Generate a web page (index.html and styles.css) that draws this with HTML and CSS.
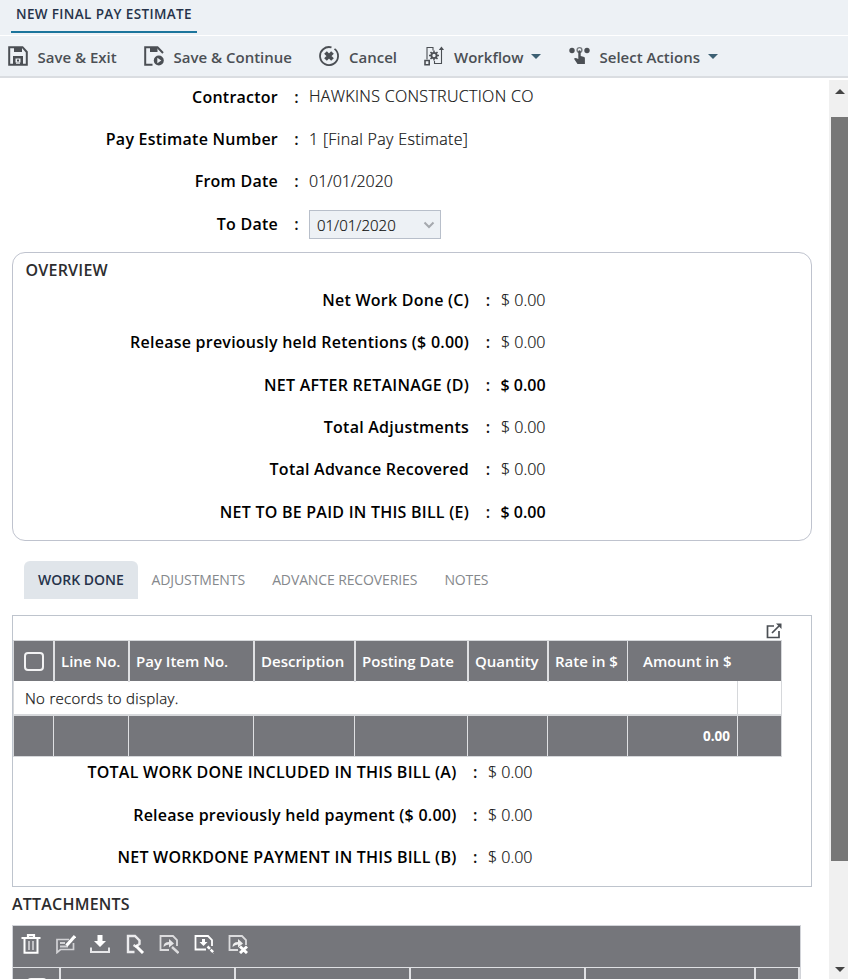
FILE: index.html
```html
<!DOCTYPE html>
<html lang="en">
<head>
<meta charset="utf-8">
<title>New Final Pay Estimate</title>
<link rel="stylesheet" href="styles.css">
</head>
<body>
<header class="titlebar"><h1 class="title"><span>NEW FINAL PAY ESTIMATE</span></h1></header>
<nav class="toolbar">
  <button class="tool save-exit">
    <svg width="20" height="20" viewBox="0 0 20 20"><path d="M1.200 1.200H14.500L18.800 6V18.800H1.200Z" fill="none" stroke="#4b4f54" stroke-width="2"/><path d="M6 1h8v5H6zM5 10h10v8.500h-3V16.500H8v2H5z" fill="#4b4f54"/><path d="M7.500 12.500h5v4h-5z" fill="#edf1f5"/><path d="M9 13.500h2v2H9z" fill="#4b4f54"/></svg>
    <span>Save &amp; Exit</span></button>
  <button class="tool save-cont">
    <svg width="20" height="20" viewBox="0 0 20 20"><path d="M8.500 18.800H1.200V1.200H13.500L19 7" fill="none" stroke="#4b4f54" stroke-width="2"/><path d="M6 1h7.500v5H6z" fill="#4b4f54"/><circle cx="14.800" cy="14.500" r="5" fill="#4b4f54"/><path d="M13.300 11.700v5.600l4-2.800z" fill="#edf1f5"/></svg>
    <span>Save &amp; Continue</span></button>
  <button class="tool cancel">
    <svg width="20" height="20" viewBox="0 0 20 20"><path d="M15.500 2.900A9 9 0 1 1 12.500 1.400" fill="none" stroke="#4b4f54" stroke-width="1.800"/><path d="M6.500 6.500l7 7M13.500 6.500l-7 7" stroke="#4b4f54" stroke-width="3.800"/></svg>
    <span>Cancel</span></button>
  <button class="tool workflow">
    <svg width="20" height="20" viewBox="0 0 20 20" fill="none" stroke="#4b4f54"><path d="M3 13.500V1.500H9V4.500M17.500 3V17.500H10.500V15" stroke-width="1.100"/><path d="M1 14.500h4.200v4.200H1z" stroke-width="1.600"/><path d="M14.800 4L17.500.5 20 4z" fill="#4b4f54" stroke="none"/><circle cx="10" cy="9.500" r="2.600" stroke-width="1.900"/><path d="M10 4.500v2M10 12.500v2M5 9.500h2M13 9.500h2M6.500 6l1.400 1.400M12.100 11.600l1.400 1.400M13.500 6l-1.400 1.400M7.900 11.600l-1.400 1.400" stroke-width="1.500"/></svg>
    <span>Workflow</span><i class="caret"></i></button>
  <button class="tool actions">
    <svg width="21" height="20" viewBox="0 0 21 20"><circle cx="3" cy="4.500" r="2.700" fill="#4b4f54"/><circle cx="18" cy="4.500" r="2.700" fill="#4b4f54"/><circle cx="10.500" cy="4" r="2.400" fill="none" stroke="#777b7f" stroke-width="1.400"/><path d="M9.300 5q1.200-1.400 2.400 0v5l3.500 1q1 .5.700 2v5H8.500L5 12.800q1-1.500 4.300.3z" fill="#4b4f54"/></svg>
    <span>Select Actions</span><i class="caret"></i></button>
</nav>
<div class="body">
  <main class="content">
    <section class="fields top">
      <b>Contractor</b><i>:</i><span class="wide">HAWKINS CONSTRUCTION CO</span>
      <b>Pay Estimate Number</b><i>:</i><span class="wide">1 [Final Pay Estimate]</span>
      <b>From Date</b><i>:</i><span>01/01/2020</span>
      <b>To Date</b><i>:</i><div class="select"><span>01/01/2020</span><svg width="12" height="8" viewBox="0 0 12 8"><path d="M1.500 1.500L6 6l4.500-4.500" fill="none" stroke="#a5a9ae" stroke-width="2"/></svg></div>
    </section>
    <section class="overview">
      <h2>OVERVIEW</h2>
      <div class="fields mid">
        <b>Net Work Done (C)</b><i>:</i><span>$ 0.00</span>
        <b>Release previously held Retentions ($ 0.00)</b><i>:</i><span>$ 0.00</span>
        <b>NET AFTER RETAINAGE (D)</b><i>:</i><span class="strong">$ 0.00</span>
        <b>Total Adjustments</b><i>:</i><span>$ 0.00</span>
        <b>Total Advance Recovered</b><i>:</i><span>$ 0.00</span>
        <b>NET TO BE PAID IN THIS BILL (E)</b><i>:</i><span class="strong">$ 0.00</span>
      </div>
    </section>
    <div class="tabs"><a class="active">WORK DONE</a><a>ADJUSTMENTS</a><a>ADVANCE RECOVERIES</a><a>NOTES</a></div>
    <section class="panel">
      <div class="popout"><svg width="16" height="16" viewBox="0 0 16 16" fill="none" stroke="#4b4f54" stroke-width="1.700"><path d="M8 3H1.500v11.500H13V8M6 10l7-7"/><path d="M10 .5h5.500V6z" fill="#4b4f54" stroke="none"/></svg></div>
      <div class="grid">
        <div class="row head"><div class="check"><i></i></div><div>Line No.</div><div>Pay Item No.</div><div>Description</div><div>Posting Date</div><div>Quantity</div><div>Rate in $</div><div class="amount">Amount in $</div><div></div></div>
        <div class="row empty"><div>No records to display.</div><div></div></div>
        <div class="row foot"><div></div><div></div><div></div><div></div><div></div><div></div><div></div><div class="sum">0.00</div><div></div></div>
      </div>
      <div class="fields low">
        <b>TOTAL WORK DONE INCLUDED IN THIS BILL (A)</b><i>:</i><span>$ 0.00</span>
        <b>Release previously held payment ($ 0.00)</b><i>:</i><span>$ 0.00</span>
        <b>NET WORKDONE PAYMENT IN THIS BILL (B)</b><i>:</i><span>$ 0.00</span>
      </div>
    </section>
    <h2 class="att-title">ATTACHMENTS</h2>
    <section class="attachments">
      <div class="att-tools">
        <svg width="20" height="20" viewBox="0 0 20 20" fill="none" stroke="#fff"><path d="M.5 4h19M7 3V1.200h6V3" stroke-width="2.200"/><path d="M3.500 5v13.800h13V5" stroke-width="2"/><path d="M8 7v9M12 7v9" stroke-width="1.500" stroke="#dcdcde"/></svg>
        <svg width="20" height="20" viewBox="0 0 20 20" fill="none" stroke="#d2d2d5"><path d="M13 5.500H1v13l3.500-3H17.500V9" stroke-width="1.700"/><path d="M4 9h5M4 12.500h8" stroke-width="1.900"/><path d="M10.500 11.500l8.500-9.500" stroke="#fff" stroke-width="3.200"/></svg>
        <svg width="20" height="20" viewBox="0 0 20 20"><path d="M7.500 1h5v6h3.500L10 13 4 7h3.500z" fill="#fff"/><path d="M1 13.500V18h18v-4.500" fill="none" stroke="#e6e6e8" stroke-width="2"/></svg>
        <svg width="20" height="20" viewBox="0 0 20 20" fill="none" stroke="#fff"><path d="M9.500 18H3V2h7l4.500 4.500v3.500L11 12.500 8.500 11" stroke="#ececee" stroke-width="2.400"/><path d="M10.500 11.500l7.500 7.500" stroke-width="3"/></svg>
        <svg width="20" height="20" viewBox="0 0 20 20" fill="none" stroke="#dcdcde"><path d="M10 16H1.500V2H14l4 4v6" stroke-width="1.800"/><path d="M4.500 13q0-5 5.500-5V5l5 4.500-5 4v-3q-3 0-5.500 2.500z" fill="#e4e4e6" stroke="none"/><path d="M13 13l6.500 6" stroke-width="2.400"/></svg>
        <svg width="20" height="20" viewBox="0 0 20 20" fill="none" stroke="#fff"><path d="M12 15.500H1.500V2H14l4 4v6" stroke-width="1.800"/><path d="M8 5h3v3h2.500L9.500 12l-4-4H8z" fill="#fff" stroke="none"/><path d="M13.500 12.500l6.500 6.500" stroke-width="2.500" stroke-dasharray="3.500 1"/></svg>
        <svg width="20" height="20" viewBox="0 0 20 20" fill="none" stroke="#dcdcde"><path d="M10 16H1.500V2H14l4 4v5" stroke-width="1.800"/><path d="M4.500 13q0-5 5.500-5V5l5 4.500-5 4v-3q-3 0-5.500 2.500z" fill="#eee" stroke="none"/><path d="M12 12.500l7 6.500M19 12.500L12 19" stroke="#fff" stroke-width="3"/></svg>
      </div>
      <div class="att-head"><div><i></i></div><div></div><div></div><div></div><div></div><div></div></div>
    </section>
  </main>
  <aside class="scroll"><i class="up"></i><div class="thumb"></div><i class="down"></i></aside>
</div>
</body>
</html>
```
FILE: styles.css
```css
* { box-sizing: border-box; }
html, body { margin: 0; height: 979px; overflow: hidden; }
body { background: #fff; font-family: "Open Sans", sans-serif; font-size: 16px; color: #222; display: flex; flex-direction: column; }
svg { display: block; flex: none; }
i { font-style: normal; }
h1, h2 { margin: 0; }
.titlebar { height: 36px; flex: none; background: #edf1f5; border-bottom: 1px solid #fff; padding-left: 11px; }
.title { width: 186px; height: 33px; border-bottom: 2px solid #1c759c; padding-left: 5px; font-size: 13.5px; letter-spacing: .36px; line-height: 28px; font-weight: 600; color: #26334a; white-space: nowrap; }
.toolbar { height: 42px; flex: none; background: #edf1f5; border-bottom: 2px solid #dadde1; display: flex; align-items: center; padding-left: 8px; }
.tool { border: 0; background: none; padding: 0; display: flex; align-items: center; font: 600 15px "Open Sans", sans-serif; color: #4b4f54; white-space: nowrap; }
.tool span { margin-left: 10px; margin-top: 1px; }
.tool.save-exit span, .tool.save-cont span, .tool.actions span { margin-left: 9.500px; }
.save-exit { width: 136px; }
.save-cont { width: 175px; }
.cancel { width: 105px; }
.workflow { width: 145px; }
.caret { border: 5px solid transparent; border-top-color: #3d6073; border-bottom: 0; margin-left: 8px; }
.body { flex: 1; min-height: 0; display: flex; }
.content { width: 829px; padding-left: 12px; overflow: hidden; }
.fields { display: grid; align-items: center; white-space: nowrap; }
.fields b { font-weight: 600; color: #000; text-align: right; letter-spacing: .24px; }
.fields i { font-weight: 600; color: #111; text-align: center; }
.fields span { font-size: 16px; font-weight: 300; color: #111; -webkit-text-stroke: .2px #111; }
.fields .wide { letter-spacing: .32px; }
.fields .strong { font-weight: 600; color: #000; -webkit-text-stroke: 0; margin-left: -.5px; }
.top { grid-template-columns: 266px 31px 1fr; grid-template-rows: repeat(4, 42.4px); margin-top: -2.500px; }
.top i, .mid i, .low i { padding-left: 6px; }
.top .wide:nth-child(3) { margin-top: -1px; }
.select { width: 132px; height: 29px; border: 1px solid #b8bfca; background: #edf1f5; display: flex; align-items: center; justify-content: space-between; padding: 2px 5px 0 7px; margin-top: 1px; }
.fields .select span { font-size: 15px; }
.overview { width: 800px; height: 289px; margin-top: 6.900px; border: 1px solid #bfc3ce; border-radius: 13px; }
.overview h2, .att-title { font-size: 16px; letter-spacing: .22px; line-height: 22px; font-weight: 600; color: #2d2d2f; }
.overview h2 { padding: 6px 0 0 12.500px; height: 25.600px; }
.mid { grid-template-columns: 456px 32px 1fr; grid-template-rows: repeat(6, 42.400px); }
.tabs { display: flex; margin: 20px 0 16px 12px; height: 38px; line-height: 38px; font-size: 14px; letter-spacing: -.12px; color: #85888c; }
.tabs a { padding: 0 13.600px; }
.tabs .active { width: 114px; padding-left: 14px; letter-spacing: 0; background: #e0e5ea; border-radius: 6px 6px 0 0; font-weight: 600; color: #26334a; white-space: nowrap; }
.panel { width: 800px; height: 272px; border: 1px solid #bec4cd; }
.popout { height: 24px; padding: 7px 0 0 753px; }
.grid { width: 769px; border: 1px solid #d6d8db; }
.row { display: grid; grid-template-columns: 40px 75px 125px 101px 113px 80px 80px 110px 43px; align-items: stretch; }
.head { grid-template-columns: 39px 75px 125px 101px 113px 80px 80px 110px 45px; height: 40px; background: #75767b; color: #fff; font-size: 15px; font-weight: 600; line-height: 41px; white-space: nowrap; }
.head > div { padding-left: 6px; border-left: 2px solid #dfe0e3; }
.head > .check, .head > div:last-child { border: 0; }
.head > .check { padding: 11px 0 0 10px; }
.check i { display: block; width: 20px; height: 19px; border: 2px solid #f2f2f3; border-radius: 4px; }
.head > .amount { padding-left: 15px; border-left-width: 1px; }
.empty { height: 33px; grid-template-columns: 724px 43px; font-size: 15px; font-weight: 300; -webkit-text-stroke: .25px #111; letter-spacing: .3px; line-height: 35px; }
.empty > div:first-child { padding-left: 11px; border-right: 1px solid #d6d8db; }
.foot { height: 42px; background: #75767b; border-top: 2px solid #d6d8db; color: #fff; font-weight: 700; font-size: 13.500px; line-height: 40px; }
.foot > div { border-right: 1px solid #dfe0e3; text-align: right; padding-right: 7px; }
.foot > div:last-child { border: 0; }
.low { grid-template-columns: 443.500px 31.500px 1fr; grid-template-rows: repeat(3, 42.400px); margin-top: -6px; }
.att-title { margin-top: 6px; margin-bottom: 10px; }
.attachments { width: 789px; height: 80px; border: 1px solid #d2d4d9; background: #75767b; }
.att-tools { height: 41px; padding: 8px 0 0 8px; display: flex; gap: 14.500px; }
.att-head { height: 38px; border-top: 1px solid #dfe0e3; display: grid; grid-template-columns: 48px 175px 175px 175px 170px 1fr; }
.att-head > div { border-right: 2px solid #dfe0e3; }
.att-head i { display: block; margin: 10px 0 0 14px; width: 20px; height: 19px; border: 2px solid #f2f2f3; border-radius: 4px; }
.scroll { width: 19px; margin-top: 2px; background: #f0f0f0; display: flex; flex-direction: column; align-items: center; padding-left: 2px; }
.up { border: 5px solid transparent; border-bottom-color: #444; border-top: 0; margin-top: 9px; }
.thumb { width: 17px; height: 744px; margin-top: 23px; background: #777; }
.down { border: 5px solid transparent; border-top-color: #444; border-bottom: 0; margin-top: 106px; }
```
